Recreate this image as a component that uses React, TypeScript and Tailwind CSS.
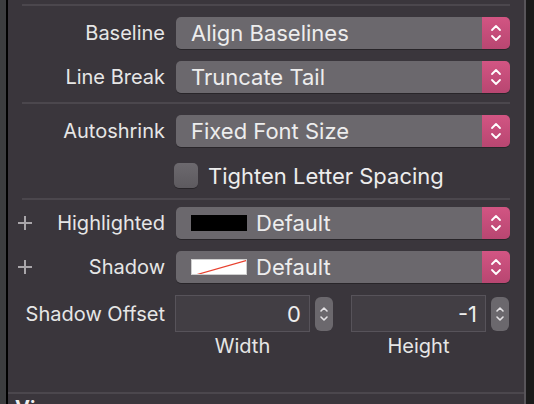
import React from 'react';

const Chevrons: React.FC<{ small?: boolean }> = ({ small }) => (
  <svg width={small ? 10 : 12} height={small ? 22 : 20} viewBox={small ? '0 0 10 22' : '0 0 12 20'} fill="none">
    {small ? (
      <>
        <path d="M2 8 L5 5 L8 8" stroke="#e4e2e5" strokeWidth="1.6" strokeLinecap="round" strokeLinejoin="round" />
        <path d="M2 14 L5 17 L8 14" stroke="#e4e2e5" strokeWidth="1.6" strokeLinecap="round" strokeLinejoin="round" />
      </>
    ) : (
      <>
        <path d="M2 7 L6 3 L10 7" stroke="#fff" strokeWidth="1.8" strokeLinecap="round" strokeLinejoin="round" />
        <path d="M2 13 L6 17 L10 13" stroke="#fff" strokeWidth="1.8" strokeLinecap="round" strokeLinejoin="round" />
      </>
    )}
  </svg>
);

const Plus = () => (
  <svg width="14" height="14" viewBox="0 0 14 14">
    <path d="M7 0 V14 M0 7 H14" stroke="#a9a6aa" strokeWidth="2" />
  </svg>
);

const Popup: React.FC<{ children: React.ReactNode }> = ({ children }) => (
  <div className="ml-[11px] flex-1 h-8 flex rounded-[5px] overflow-hidden shadow-[0_1px_0_rgba(0,0,0,0.3)]">
    <div className="flex-1 bg-[#6b686d] flex items-center pl-[15px] text-[22px] text-[#ededed]">{children}</div>
    <div className="w-[28px] bg-gradient-to-b from-[#d25583] to-[#b84671] flex items-center justify-center">
      <Chevrons />
    </div>
  </div>
);

const Row: React.FC<{ label: string; plus?: boolean; children: React.ReactNode; className?: string }> = ({
  label,
  plus,
  children,
  className,
}) => (
  <div className={`flex items-center pr-[14px] ${className ?? ''}`}>
    <div className="w-[157px] flex items-center">
      <div className="w-[24px] pl-[10px]">{plus && <Plus />}</div>
      <div className="flex-1 text-right text-[#e6e6e6]">{label}</div>
    </div>
    {children}
  </div>
);

const Separator: React.FC<{ className?: string }> = ({ className }) => (
  <div className={`mx-[14px] h-[2px] bg-[#4b474d] ${className ?? ''}`} />
);

const NumberField: React.FC<{ value: string }> = ({ value }) => (
  <div className="w-[135px] h-[37px] bg-[#423e44] border border-[#57535a] flex items-center justify-end pr-[8px] text-[22px] text-[#ededed]">
    {value}
  </div>
);

const Stepper = () => (
  <div className="ml-[5px] w-[18px] h-[34px] rounded-[6px] bg-[#6b686d] flex items-center justify-center">
    <Chevrons small />
  </div>
);

export default function App() {
  return (
    <div className="w-[534px] h-[404px] flex overflow-hidden bg-[#3a363c] font-['Inter',sans-serif] text-[20px] leading-6">
      <div className="w-[6px] bg-[#3c3d3f]" />
      <div className="w-[2px] bg-black" />

      <div className="flex-1 flex flex-col pt-[4px]">
        <Separator />

        <Row label="Baseline" className="mt-[11px]">
          <Popup>Align Baselines</Popup>
        </Row>
        <Row label="Line Break" className="mt-[12px]">
          <Popup>Truncate Tail</Popup>
        </Row>

        <Separator className="mt-[9px]" />

        <Row label="Autoshrink" className="mt-[11px]">
          <Popup>Fixed Font Size</Popup>
        </Row>
        <div className="mt-[16px] flex items-center pl-[166px]">
          <div className="w-[24px] h-[25px] rounded-[5px] bg-gradient-to-b from-[#6c696e] to-[#5d5a5f] shadow-[0_1px_0_rgba(0,0,0,0.3)]" />
          <span className="ml-[10px] text-[22px] text-[#ededed]">Tighten Letter Spacing</span>
        </div>

        <Separator className="mt-[10px]" />

        <Row label="Highlighted" plus className="mt-[7px]">
          <Popup>
            <div className="w-[56px] h-[16px] bg-black mr-[9px]" />
            Default
          </Popup>
        </Row>
        <Row label="Shadow" plus className="mt-[12px]">
          <Popup>
            <div className="w-[56px] h-[16px] mr-[9px] bg-white border border-[#cfcfcf] relative overflow-hidden">
              <svg className="absolute inset-0" width="56" height="16" viewBox="0 0 56 16" preserveAspectRatio="none">
                <line x1="0" y1="16" x2="56" y2="0" stroke="#e8412f" strokeWidth="1.2" />
              </svg>
            </div>
            Default
          </Popup>
        </Row>

        <div className="mt-[12px] flex items-center pr-[14px]">
          <div className="w-[157px] text-right text-[#e6e6e6]">Shadow Offset</div>
          <div className="ml-[10px] flex items-center">
            <NumberField value="0" />
            <Stepper />
          </div>
          <div className="ml-[18px] flex items-center">
            <NumberField value="-1" />
            <Stepper />
          </div>
        </div>
        <div className="mt-[2px] flex text-[#e6e6e6]">
          <div className="ml-[167px] w-[135px] text-center">Width</div>
          <div className="ml-[41px] w-[135px] text-center">Height</div>
        </div>

        <div className="mt-auto h-[2px] bg-[#4b474d]" />
        <div className="h-[10px] pl-[7px] pt-[2px] font-bold text-[#ededed]">View</div>
      </div>

      <div className="w-[2px] bg-[#58555a]" />
      <div className="w-[8px] bg-[#1a1a1a]" />
    </div>
  );
}
